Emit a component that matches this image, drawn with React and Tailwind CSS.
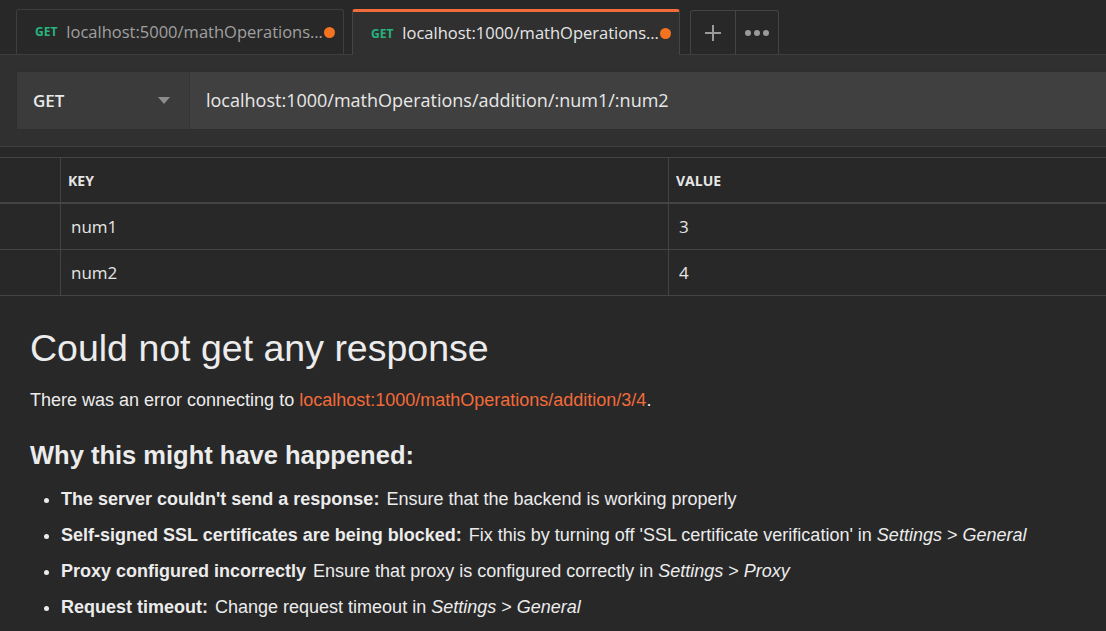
const ui = { fontFamily: "'Open Sans', 'Noto Sans', sans-serif" }
const arial = { fontFamily: "'Liberation Sans', Arial, sans-serif" }

const PARAMS = [
  { key: 'num1', value: '3' },
  { key: 'num2', value: '4' },
]

function Tab({ url, active }) {
  return (
    <div
      className={
        active
          ? 'relative -mb-px flex h-[46px] w-[328px] items-center rounded-t-[3px] border-x border-t-[3px] border-x-[#444] border-t-[#f26b3a] bg-[#303030] pl-[18px] pr-[8px]'
          : 'flex h-[45px] w-[328px] items-center rounded-t-[3px] border-x border-t border-[#3e3e3e] bg-[#282828] pl-[18px] pr-[8px]'
      }
    >
      <span className="mr-[9px] text-[12px] font-bold text-[#26b47f]">GET</span>
      <span className={`min-w-0 flex-1 truncate text-[16.5px] ${active ? 'text-[#e6e6e6]' : 'text-[#a0a0a0]'}`}>{url}</span>
      <span className="ml-[1px] h-[11px] w-[11px] shrink-0 rounded-full bg-[#f37321]" />
    </div>
  )
}

export default function App() {
  return (
    <div className="h-[631px] w-[1106px] overflow-hidden bg-[#282828]" style={ui}>
      {/* tab strip */}
      <div className="flex h-[55px] items-end gap-2 border-b border-[#3e3e3e] pl-4">
        <Tab url="localhost:5000/mathOperations..." />
        <Tab url="localhost:1000/mathOperations..." active />
        <div className="ml-[2px] flex h-[44px] rounded-t-[3px] border-x border-t border-[#444]">
          <div className="flex w-[45px] items-center justify-center border-r border-[#444]">
            <svg width="18" height="18" viewBox="0 0 18 18" fill="none" stroke="#9a9a9a" strokeWidth="2">
              <path d="M9 1v16M1 9h16" />
            </svg>
          </div>
          <div className="flex w-[42px] items-center justify-center gap-[3px]">
            <span className="h-[6px] w-[6px] rounded-full bg-[#9a9a9a]" />
            <span className="h-[6px] w-[6px] rounded-full bg-[#9a9a9a]" />
            <span className="h-[6px] w-[6px] rounded-full bg-[#9a9a9a]" />
          </div>
        </div>
      </div>

      {/* request bar */}
      <div className="border-b border-[#3e3e3e] bg-[#303030] py-4 pl-4">
        <div className="flex h-[59px] rounded-l-[3px] border border-r-0 border-[#2e2e2e] bg-[#404040]">
          <div className="flex w-[173px] items-center justify-between border-r border-[#353535] bg-[#3b3b3b] pl-[16px] pr-[19px]">
            <span className="text-[17px] font-semibold text-[#e8e8e8]">GET</span>
            <svg width="12" height="7" viewBox="0 0 12 7">
              <path d="M0 0h12L6 7z" fill="#8c8c8c" />
            </svg>
          </div>
          <div className="flex flex-1 items-center pl-[16px] text-[18px] text-[#e8e8e8]">
            localhost:1000/mathOperations/addition/:num1/:num2
          </div>
        </div>
      </div>

      {/* params table */}
      <div className="mt-[10px] border-t border-[#444]">
        <div className="flex h-[46px] border-b-2 border-[#444]">
          <div className="w-[61px] border-r border-[#444]" />
          <div className="flex w-[608px] items-center border-r border-[#444] pl-[7px] pt-[1px] text-[14px] font-bold text-[#e6e6e6]">KEY</div>
          <div className="flex flex-1 items-center pl-[7px] pt-[1px] text-[14px] font-bold text-[#e6e6e6]">VALUE</div>
        </div>
        {PARAMS.map((p) => (
          <div key={p.key} className="flex h-[46px] border-b border-[#444]">
            <div className="w-[61px] border-r border-[#444]" />
            <div className="flex w-[608px] items-center border-r border-[#444] pl-[10px] text-[17px] text-[#e6e6e6]">{p.key}</div>
            <div className="flex flex-1 items-center pl-[10px] text-[17px] text-[#e6e6e6]">{p.value}</div>
          </div>
        ))}
      </div>

      {/* response */}
      <div className="px-[30px] pt-[31px] text-[#ececec]" style={arial}>
        <h1 className="text-[37.5px] leading-[42px]">Could not get any response</h1>
        <p className="mt-[20px] text-[18px] leading-[22px]">
          There was an error connecting to <span className="text-[#f26b3a]">localhost:1000/mathOperations/addition/3/4</span>.
        </p>
        <h2 className="mt-[29px] text-[25.5px] font-bold leading-[30px]">Why this might have happened:</h2>
        <ul className="mt-[11px] list-disc pl-[31px] text-[18px]">
          <li className="leading-[36px]">
            <b className="mr-[7px]">The server couldn't send a response:</b>Ensure that the backend is working properly
          </li>
          <li className="leading-[36px]">
            <b className="mr-[7px]">Self-signed SSL certificates are being blocked:</b>Fix this by turning off 'SSL certificate verification' in <i>Settings</i> &gt; <i>General</i>
          </li>
          <li className="leading-[36px]">
            <b className="mr-[7px]">Proxy configured incorrectly</b>Ensure that proxy is configured correctly in <i>Settings</i> &gt; <i>Proxy</i>
          </li>
          <li className="leading-[36px]">
            <b className="mr-[7px]">Request timeout:</b>Change request timeout in <i>Settings</i> &gt; <i>General</i>
          </li>
        </ul>
      </div>
    </div>
  )
}
